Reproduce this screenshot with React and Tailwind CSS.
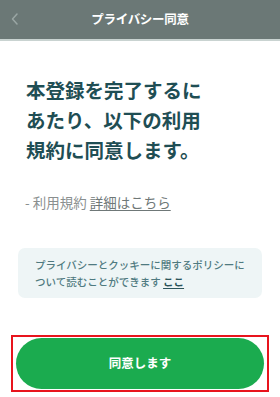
import React from 'react';

const jp = { fontFamily: '"Noto Sans CJK JP", "Noto Sans", sans-serif' };

export default function App() {
  return (
    <div className="w-[280px] h-[397px] bg-white flex flex-col" style={jp}>
      {/* Header */}
      <div className="h-[41px] bg-[#6b7876] border-b-2 border-[#c9d3d1] flex items-center relative">
        <svg className="absolute left-[10px] top-[12px]" width="10" height="14" viewBox="0 0 10 14">
          <path d="M7 2 L2.5 7 L7 12" fill="none" stroke="#9aa6a4" strokeWidth="1.5" strokeLinecap="round" strokeLinejoin="round" />
        </svg>
        <div className="flex-1 text-center text-white font-bold text-[12.5px] tracking-tight">プライバシー同意</div>
      </div>

      {/* Heading */}
      <div className="px-[26px] pt-[34px]">
        <h1 className="text-[19.5px] leading-[30px] font-bold text-[#1f4e54]">
          本登録を完了するに<br />あたり、以下の利用<br />規約に同意します。
        </h1>
      </div>

      {/* Terms link */}
      <div className="px-[25px] mt-[27px] text-[13.5px] leading-[20px] text-[#8a8f8f]">
        - 利用規約 <span className="underline underline-offset-2 text-[#6f7878]">詳細はこちら</span>
      </div>

      {/* Policy box */}
      <div className="mx-[18px] mt-[36px] rounded-[7px] bg-[#eef5f6] px-[17px] py-[8px] text-[10.5px] leading-[17px] text-[#4f7a80] font-medium">
        プライバシーとクッキーに関するポリシーに<br />
        ついて読むことができます <span className="font-bold underline underline-offset-2 text-[#2c545a]">ここ</span>
      </div>

      {/* Agree button */}
      <div className="mt-[37px] mx-[11px] border-2 border-[#e8141d] p-[1px] px-[3px]">
        <button className="w-full h-[51px] rounded-full bg-[#1bab4f] text-white font-bold text-[12.5px]">
          同意します
        </button>
      </div>
    </div>
  );
}
